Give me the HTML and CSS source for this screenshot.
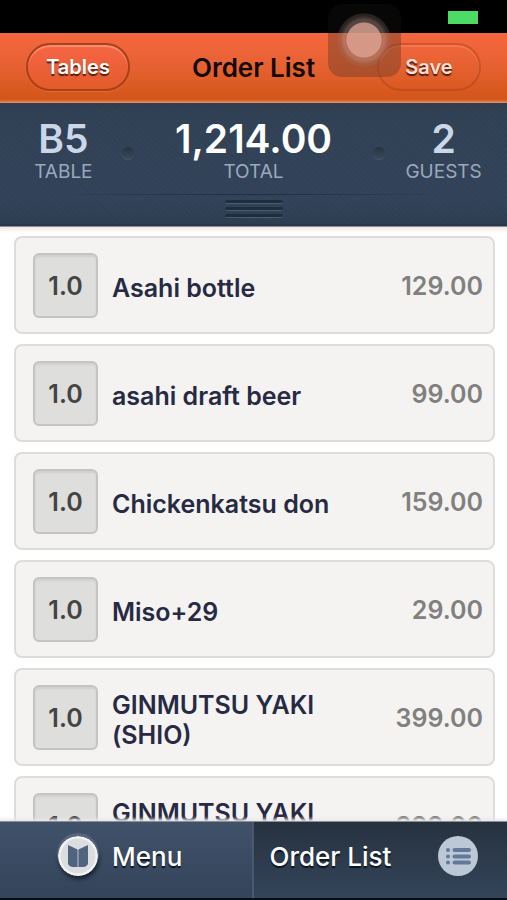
FILE: index.html
```html
<!DOCTYPE html>
<html lang="en">
<head>
<meta charset="utf-8">
<meta name="viewport" content="width=device-width, initial-scale=1">
<title>Order List</title>
<link rel="stylesheet" href="styles.css">
</head>
<body>
<div class="app">
  <div class="status"><span class="battery"></span></div>
  <header class="navbar">
    <button class="pill" type="button">Tables</button>
    <h1 class="title">Order List</h1>
    <button class="pill pill-dim" type="button">Save</button>
  </header>
  <section class="summary">
    <div class="stats">
      <div class="stat"><strong>B5</strong><span>TABLE</span></div>
      <div class="stat stat-total"><strong>1,214.00</strong><span>TOTAL</span></div>
      <div class="stat"><strong>2</strong><span>GUESTS</span></div>
    </div>
    <div class="handle"><i></i><i></i><i></i></div>
  </section>
  <main class="orders">
    <ul class="list">
      <li class="card"><span class="qty">1.0</span><span class="name">Asahi bottle</span><span class="price">129.00</span></li>
      <li class="card"><span class="qty">1.0</span><span class="name">asahi draft beer</span><span class="price">99.00</span></li>
      <li class="card"><span class="qty">1.0</span><span class="name">Chickenkatsu don</span><span class="price">159.00</span></li>
      <li class="card"><span class="qty">1.0</span><span class="name">Miso+29</span><span class="price">29.00</span></li>
      <li class="card"><span class="qty">1.0</span><span class="name">GINMUTSU YAKI (SHIO)</span><span class="price">399.00</span></li>
      <li class="card"><span class="qty">1.0</span><span class="name">GINMUTSU YAKI (SHIO)</span><span class="price">399.00</span></li>
    </ul>
  </main>
  <nav class="tabs">
    <button class="tab tab-menu" type="button">
      <svg class="icon icon-raised" viewBox="0 0 40 40" aria-hidden="true">
        <circle cx="20" cy="20" r="20" fill="#f3f3f5"/>
        <circle cx="20" cy="20" r="17.5" fill="#dcdde1"/>
        <path d="M10 9 19.600 13.500V31H14.500Q10 30 10 27ZM30 9 20.400 13.500V31H25.500Q30 30 30 27Z" fill="#50637f"/>
      </svg>
      <span>Menu</span>
    </button>
    <button class="tab tab-orders" type="button">
      <span>Order List</span>
      <svg class="icon" viewBox="0 0 40 40" aria-hidden="true">
        <circle cx="20" cy="20" r="20" fill="#bdc8d7"/>
        <g fill="#64799a">
          <circle cx="10" cy="14" r="2"/><rect x="14.500" y="12" width="18.500" height="4" rx="2"/>
          <circle cx="10" cy="20.500" r="2"/><rect x="14.500" y="18.500" width="18.500" height="4" rx="2"/>
          <circle cx="10" cy="26.500" r="2"/><rect x="14.500" y="24.500" width="18.500" height="4" rx="2"/>
        </g>
      </svg>
    </button>
  </nav>
  <div class="assist"></div>
</div>
</body>
</html>
```
FILE: styles.css
```css
* { box-sizing: border-box; }

body {
  margin: 0;
  background: #fff;
  font-family: Inter, "Liberation Sans", sans-serif;
  font-weight: 500;
}

button {
  border: 0;
  margin: 0;
  padding: 0;
  background: none;
  font: inherit;
  cursor: pointer;
}

.app {
  position: relative;
  display: flex;
  flex-direction: column;
  height: 100vh;
  overflow: hidden;
}

.status {
  display: flex;
  flex: none;
  justify-content: flex-end;
  height: 33px;
  padding: 11px 29px 0;
  background: #000;
}

.battery {
  width: 30px;
  height: 13px;
  background: #4cdb64;
}

.navbar {
  display: grid;
  flex: none;
  grid-template-columns: 104px 1fr 104px;
  align-items: center;
  padding: 10px 26px 12px;
  background: linear-gradient(#f5673f, #e56131 50%, #d15415);
}

.pill {
  height: 48px;
  border: 2px solid #a8401a;
  border-radius: 24px;
  background: linear-gradient(#f66546, #e35b2a);
  box-shadow: inset 0 2px 1px rgba(255, 170, 130, 0.6), 0 1px 0 rgba(255, 150, 100, 0.3);
  color: #fff;
  font-size: 20px;
  font-weight: 600;
  text-shadow: 0 2px 1px rgba(50, 15, 5, 0.85);
}

.pill-dim {
  border-color: rgba(168, 64, 26, 0.45);
  background: none;
  box-shadow: inset 0 2px 1px rgba(255, 170, 130, 0.3);
  color: #fcded3;
}

.title {
  margin: 0;
  padding-top: 2px;
  color: #120a08;
  font-size: 26px;
  font-weight: 600;
  line-height: 30px;
  text-align: center;
  white-space: nowrap;
}

.summary {
  position: relative;
  z-index: 1;
  flex: none;
  border-bottom: 2px solid #28374a;
  background:
    repeating-linear-gradient(45deg, rgba(0, 0, 0, 0.04) 0 1px, transparent 1px 4px),
    linear-gradient(#303d4d, #324256 8%, #33435a 80%, #2e3e52);
  box-shadow: 0 1px 0 #8a8f98, 0 2px 4px 2px #f3e7e3;
}

.stats {
  display: grid;
  grid-template-columns: 1fr 2fr 1fr;
  padding: 16px 0 10px;
}

.stat {
  position: relative;
  display: flex;
  flex-direction: column;
  align-items: center;
  color: #9ba9bc;
  font-size: 19px;
  font-weight: 400;
  line-height: 25px;
}

.stat strong {
  color: #c9d7e9;
  font-size: 39px;
  font-weight: 600;
  line-height: 40px;
}

.stat-total strong { color: #fff; }

.stat-total::before,
.stat-total::after {
  content: "";
  position: absolute;
  top: 28px;
  width: 12px;
  height: 12px;
  border-radius: 50%;
  background: linear-gradient(#263343, #3a495c);
  box-shadow: 0 1px 1px #4b5b70;
}

.stat-total::before { left: -5px; }
.stat-total::after { right: -5px; }

.handle {
  display: flex;
  flex-direction: column;
  align-items: center;
  gap: 3px;
  padding: 6px 0;
  background: linear-gradient(90deg, transparent 10%, #222f3e 45%, #222f3e 55%, transparent 90%) top / 100% 1px no-repeat;
}

.handle i {
  width: 58px;
  height: 4px;
  border-bottom: 1px solid #4b5b70;
  border-radius: 2px;
  background: #202d3c;
}

.orders {
  flex: 1;
  min-height: 0;
  overflow: hidden;
  padding: 10px 12px 0 14px;
}

.list {
  display: flex;
  flex-direction: column;
  gap: 10px;
  margin: 0;
  padding: 0;
  list-style: none;
}

.card {
  display: flex;
  align-items: flex-start;
  gap: 14px;
  padding: 15px 10px 14px 17px;
  border: 2px solid #dcdcda;
  border-radius: 8px;
  background: #f4f3f2;
  font-size: 25px;
  line-height: 30px;
}

.qty {
  display: grid;
  flex: none;
  place-items: center;
  width: 65px;
  height: 65px;
  border: 2px solid #c4c4c2;
  border-radius: 6px;
  background: #dededd;
  box-shadow: inset 0 2px 2px #d0d0cf;
  color: #444;
  font-weight: 600;
}

.name {
  flex: 1;
  align-self: center;
  max-width: 220px;
  padding-top: 5px;
  color: #272a42;
  font-weight: 600;
}

.price {
  margin-left: auto;
  padding-top: 18px;
  color: #80807f;
  font-weight: 600;
}

.tabs {
  position: relative;
  z-index: 1;
  display: grid;
  flex: none;
  grid-template-columns: 1fr 1fr;
  border-top: 1px solid #8a8f98;
  border-bottom: 2px solid #080b10;
  box-shadow: 0 -1px 3px 1px #e9e8e8;
}

.tab {
  display: flex;
  align-items: center;
  height: 76px;
  padding-bottom: 8px;
  color: #fff;
  font-size: 26px;
  text-shadow: 0 2px 1px #0d141f;
}

.tab-menu {
  gap: 14px;
  padding-left: 58px;
  border-right: 2px solid #495a70;
  background: linear-gradient(#40516a, #34445a);
}

.tab-orders {
  justify-content: space-between;
  padding-right: 29px;
  padding-left: 16px;
  background: linear-gradient(#27323f, #34445a);
}

.icon {
  width: 40px;
  height: 40px;
}

.icon-raised {
  border-radius: 50%;
  box-shadow: 0 -2px 1px 1px #59677b, 1px 3px 4px #17202c;
}

.assist {
  position: absolute;
  top: 4px;
  right: 106px;
  width: 73px;
  height: 73px;
  border-radius: 14px;
  background:
    radial-gradient(circle at 36px 36px,
      rgba(220, 165, 150, 0.85) 0 17px,
      rgba(190, 155, 145, 0.42) 18px 21px,
      rgba(170, 140, 130, 0.32) 22px 23px,
      rgba(150, 120, 110, 0.25) 24px 26px,
      transparent 27px),
    linear-gradient(rgba(8, 8, 8, 0.9) 29px, rgba(120, 65, 40, 0.5) 29px);
  pointer-events: none;
}
```
